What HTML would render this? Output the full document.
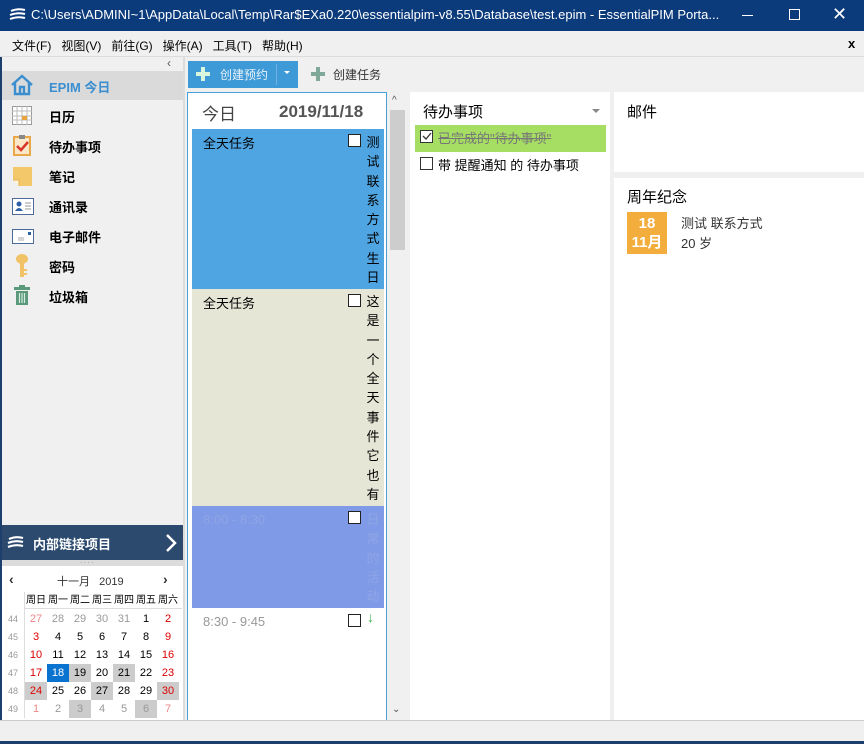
<!DOCTYPE html>
<html><head><meta charset="utf-8"><style>
*{margin:0;padding:0;box-sizing:border-box}
body{width:864px;height:744px;position:relative;overflow:hidden;background:#f0f0f0;font-family:"Liberation Sans","Noto Sans CJK SC",sans-serif;font-size:13px;color:#000}
.a{position:absolute}
.vt{position:absolute;width:14px;font-size:13px;line-height:19.3px;text-align:center}
.cal div{position:absolute;width:22px;height:18px;line-height:18px;text-align:center;font-size:11px}
</style></head><body>
<div class="a" style="left:0;top:0;width:864px;height:31px;background:#0c3b7c"></div>
<svg class="a" style="left:9px;top:8px" width="18" height="14" viewBox="0 0 18 14"><path d="M2 3 Q9 0 16 2 M1 7 Q9 4 16 6 M1 11 Q9 8 16 10" stroke="#fff" stroke-width="2" fill="none"/></svg>
<div class="a" style="left:31px;top:7px;color:#fff;font-size:13px">C:\Users\ADMINI~1\AppData\Local\Temp\Rar$EXa0.220\essentialpim-v8.55\Database\test.epim - EssentialPIM Porta...</div>
<div class="a" style="left:742px;top:15px;width:11px;height:1px;background:#fff"></div>
<div class="a" style="left:789px;top:9px;width:11px;height:11px;border:1px solid #fff"></div>
<div class="a" style="left:832px;top:4px;color:#fff;font-size:18px">✕</div>
<div class="a" style="left:0;top:31px;width:864px;height:26px;background:#f0f0f0;border-bottom:1px solid #dcdcdc"></div>
<div class="a" style="left:12px;top:37px;font-size:12px">文件(F)&nbsp;&nbsp;&nbsp;视图(V)&nbsp;&nbsp;&nbsp;前往(G)&nbsp;&nbsp;&nbsp;操作(A)&nbsp;&nbsp;&nbsp;工具(T)&nbsp;&nbsp;&nbsp;帮助(H)</div>
<div class="a" style="left:848px;top:36px;font-weight:bold;font-size:13px">x</div>
<div class="a" style="left:0;top:57px;width:2px;height:687px;background:#1d3f6e"></div>
<div class="a" style="left:167px;top:56px;font-size:12px;color:#555">‹</div>
<div class="a" style="left:2px;top:71px;width:181px;height:29px;background:#dadada"></div>
<svg class="a" style="left:10px;top:74px" width="24" height="22" viewBox="0 0 24 22"><path d="M2 11 L12 2 L22 11 M5 9 V20 H19 V9 M10 20 V13 H14 V20" stroke="#3b8fd0" stroke-width="2.4" fill="none"/></svg>
<div class="a" style="left:49px;top:77px;color:#3b8fd0;font-weight:bold;font-size:13px">EPIM 今日</div>
<svg class="a" style="left:12px;top:106px" width="20" height="19"><rect x="0.5" y="0.5" width="19" height="18" fill="#fff" stroke="#999"/><path d="M0 5H20M0 10H20M0 14H20M5 0V19M10 0V19M15 0V19" stroke="#bbb"/><rect x="10" y="10" width="5" height="4" fill="#e9a33c"/></svg>
<div class="a" style="left:49px;top:107px;font-weight:bold">日历</div>
<svg class="a" style="left:13px;top:134px" width="18" height="22"><rect x="1" y="3" width="16" height="18" fill="#fbe7c8" stroke="#e8a848" stroke-width="2"/><rect x="6" y="1" width="6" height="4" fill="#888"/><path d="M4 12 L8 16 L15 8" stroke="#d9362a" stroke-width="2.5" fill="none"/></svg>
<div class="a" style="left:49px;top:137px;font-weight:bold">待办事项</div>
<svg class="a" style="left:13px;top:167px" width="20" height="19"><path d="M0 0H19V19H6L0 13Z" fill="#f3c86a"/><path d="M0 13H6V19" fill="#fff5dc" stroke="#e0b050"/></svg>
<div class="a" style="left:49px;top:167px;font-weight:bold">笔记</div>
<svg class="a" style="left:12px;top:198px" width="22" height="17"><rect x="0.5" y="0.5" width="21" height="16" fill="#fff" stroke="#4a6a9a"/><circle cx="7" cy="6" r="2.5" fill="#2b5fa8"/><path d="M3 13 Q7 7 11 13Z" fill="#2b5fa8"/><path d="M13 5H19M13 8H19M13 11H19" stroke="#999"/></svg>
<div class="a" style="left:49px;top:197px;font-weight:bold">通讯录</div>
<svg class="a" style="left:12px;top:229px" width="22" height="15"><rect x="0.5" y="0.5" width="21" height="14" fill="#fff" stroke="#4a6a9a"/><rect x="16" y="3" width="3" height="3" fill="#2b5fa8"/><path d="M6 9H12M6 11H12" stroke="#aaa"/></svg>
<div class="a" style="left:49px;top:227px;font-weight:bold">电子邮件</div>
<svg class="a" style="left:15px;top:254px" width="14" height="24"><ellipse cx="7" cy="5" rx="6" ry="5" fill="#f2c266"/><rect x="5" y="8" width="4" height="15" fill="#f2c266"/><rect x="9" y="15" width="3" height="2" fill="#f2c266"/><rect x="9" y="19" width="3" height="2" fill="#f2c266"/></svg>
<div class="a" style="left:49px;top:257px;font-weight:bold">密码</div>
<svg class="a" style="left:14px;top:285px" width="16" height="20"><rect x="0" y="2" width="16" height="3" fill="#5a9a7a"/><rect x="5" y="0" width="6" height="2" fill="#5a9a7a"/><rect x="2" y="6" width="12" height="14" fill="#5a9a7a"/><path d="M5.5 8V18M8 8V18M10.5 8V18" stroke="#d7ebe0" stroke-width="1.2"/></svg>
<div class="a" style="left:49px;top:287px;font-weight:bold">垃圾箱</div>
<div class="a" style="left:2px;top:525px;width:181px;height:35px;background:#2b4a6e"></div>
<svg class="a" style="left:7px;top:536px" width="18" height="14"><path d="M2 3 Q9 0 16 2 M1 7 Q9 4 16 6 M1 11 Q9 8 16 10" stroke="#fff" stroke-width="2.2" fill="none"/></svg>
<div class="a" style="left:33px;top:534px;color:#fff;font-weight:bold;font-size:13px">内部链接项目</div>
<svg class="a" style="left:165px;top:533px" width="12" height="20"><path d="M2 2 L10 10 L2 18" stroke="#fff" stroke-width="2.5" fill="none"/></svg>
<div class="a" style="left:2px;top:560px;width:181px;height:6px;background:#dcdcdc"></div>
<div class="a" style="left:80px;top:558px;color:#999;font-size:8px;letter-spacing:1px">····</div>
<div class="a" style="left:2px;top:566px;width:181px;height:154px;background:#fff"></div>
<div class="a" style="left:9px;top:571px;font-size:14px;font-weight:bold;color:#333">‹</div>
<div class="a" style="left:57px;top:573px;font-size:11px;color:#333">十一月&nbsp;&nbsp;&nbsp;2019</div>
<div class="a" style="left:163px;top:571px;font-size:14px;font-weight:bold;color:#333">›</div>
<div class="a" style="left:24px;top:592px;width:1px;height:126px;background:#ddd"></div>
<div class="a" style="left:24px;top:608px;width:158px;height:1px;background:#ddd"></div>
<div class="cal a" style="left:0;top:0">
<div style="left:25px;top:592px;font-size:10px">周日</div><div style="left:47px;top:592px;font-size:10px">周一</div><div style="left:69px;top:592px;font-size:10px">周二</div><div style="left:91px;top:592px;font-size:10px">周三</div><div style="left:113px;top:592px;font-size:10px">周四</div><div style="left:135px;top:592px;font-size:10px">周五</div><div style="left:157px;top:592px;font-size:10px">周六</div>
<div style="left:2px;top:610px;color:#999;font-size:9px">44</div><div style="left:25px;top:610px;color:#e88">27</div><div style="left:47px;top:610px;color:#999">28</div><div style="left:69px;top:610px;color:#999">29</div><div style="left:91px;top:610px;color:#999">30</div><div style="left:113px;top:610px;color:#999">31</div><div style="left:135px;top:610px">1</div><div style="left:157px;top:610px;color:#d00">2</div>
<div style="left:2px;top:628px;color:#999;font-size:9px">45</div><div style="left:25px;top:628px;color:#d00">3</div><div style="left:47px;top:628px">4</div><div style="left:69px;top:628px">5</div><div style="left:91px;top:628px">6</div><div style="left:113px;top:628px">7</div><div style="left:135px;top:628px">8</div><div style="left:157px;top:628px;color:#d00">9</div>
<div style="left:2px;top:646px;color:#999;font-size:9px">46</div><div style="left:25px;top:646px;color:#d00">10</div><div style="left:47px;top:646px">11</div><div style="left:69px;top:646px">12</div><div style="left:91px;top:646px">13</div><div style="left:113px;top:646px">14</div><div style="left:135px;top:646px">15</div><div style="left:157px;top:646px;color:#d00">16</div>
<div style="left:2px;top:664px;color:#999;font-size:9px">47</div><div style="left:25px;top:664px;color:#d00">17</div><div style="left:47px;top:664px;background:#0a72cf;color:#fff">18</div><div style="left:69px;top:664px;background:#ccc">19</div><div style="left:91px;top:664px">20</div><div style="left:113px;top:664px;background:#ccc">21</div><div style="left:135px;top:664px">22</div><div style="left:157px;top:664px;color:#d00">23</div>
<div style="left:2px;top:682px;color:#999;font-size:9px">48</div><div style="left:25px;top:682px;color:#d00;background:#ccc">24</div><div style="left:47px;top:682px">25</div><div style="left:69px;top:682px">26</div><div style="left:91px;top:682px;background:#ccc">27</div><div style="left:113px;top:682px">28</div><div style="left:135px;top:682px">29</div><div style="left:157px;top:682px;color:#d00;background:#ccc">30</div>
<div style="left:2px;top:700px;color:#999;font-size:9px">49</div><div style="left:25px;top:700px;color:#e88">1</div><div style="left:47px;top:700px;color:#999">2</div><div style="left:69px;top:700px;color:#999;background:#ccc">3</div><div style="left:91px;top:700px;color:#999">4</div><div style="left:113px;top:700px;color:#999">5</div><div style="left:135px;top:700px;color:#999;background:#ccc">6</div><div style="left:157px;top:700px;color:#e88">7</div>
</div>
<div class="a" style="left:183px;top:57px;width:2px;height:663px;background:#dcdcdc"></div>
<div class="a" style="left:188px;top:61px;width:110px;height:27px;background:#3d9ad6"></div>
<div class="a" style="left:276px;top:64px;width:1px;height:21px;background:#6fb3e2"></div>
<svg class="a" style="left:196px;top:67px" width="14" height="14"><path d="M7 0V14M0 7H14" stroke="#d8f5dd" stroke-width="4"/></svg>
<div class="a" style="left:220px;top:66px;color:#e8f2fb;font-size:12px">创建预约</div>
<div class="a" style="left:284px;top:71px;width:0;height:0;border-left:3px solid transparent;border-right:3px solid transparent;border-top:3px solid #fff"></div>
<svg class="a" style="left:311px;top:67px" width="14" height="14"><path d="M7 0V14M0 7H14" stroke="#7fa898" stroke-width="4"/></svg>
<div class="a" style="left:333px;top:66px;color:#333;font-size:12px">创建任务</div>
<div class="a" style="left:187px;top:92px;width:200px;height:630px;background:#fff;border:1px solid #4a9fd8"></div>
<div class="a" style="left:202px;top:100px;font-size:17px;color:#444">今日</div>
<div class="a" style="left:279px;top:102px;font-size:17px;font-weight:bold;color:#555">2019/11/18</div>
<div class="a" style="left:192px;top:129px;width:192px;height:160px;background:#4fa4e2"></div>
<div class="a" style="left:192px;top:289px;width:192px;height:217px;background:#e6e6d6"></div>
<div class="a" style="left:192px;top:506px;width:192px;height:102px;background:#7f9ae6"></div>
<div class="a" style="left:203px;top:133px">全天任务</div>
<div class="a" style="left:203px;top:293px">全天任务</div>
<div class="a" style="left:203px;top:512px;color:#8fa5e6">8:00 - 8:30</div>
<div class="a" style="left:203px;top:614px;color:#999">8:30 - 9:45</div>
<div class="a" style="left:348px;top:134px;width:13px;height:13px;border:1px solid #222;background:#fff"></div>
<div class="a" style="left:348px;top:294px;width:13px;height:13px;border:1px solid #222;background:#fff"></div>
<div class="a" style="left:348px;top:511px;width:13px;height:13px;border:1px solid #222;background:#fff"></div>
<div class="a" style="left:348px;top:614px;width:13px;height:13px;border:1px solid #222;background:#fff"></div>
<div class="vt" style="left:366px;top:133px">测<br>试<br>联<br>系<br>方<br>式<br>生<br>日</div>
<div class="a" style="left:366px;top:292px;width:14px;height:214px;overflow:hidden"><div class="vt" style="left:0;top:0">这<br>是<br>一<br>个<br>全<br>天<br>事<br>件<br>它<br>也<br>有<br>一</div></div>
<div class="vt" style="left:366px;top:510px;color:#8fa5e6">日<br>常<br>的<br>活<br>动</div>
<div class="a" style="left:367px;top:609px;color:#3bb04a;font-size:14px">↓</div>
<div class="a" style="left:388px;top:92px;width:19px;height:630px;background:#f0f0f0"></div>
<div class="a" style="left:390px;top:110px;width:15px;height:140px;background:#cdcdcd"></div>
<div class="a" style="left:392px;top:95px;font-size:10px;color:#555">^</div>
<div class="a" style="left:392px;top:704px;font-size:10px;color:#555">⌄</div>
<div class="a" style="left:410px;top:92px;width:200px;height:630px;background:#fff"></div>
<div class="a" style="left:423px;top:101px;font-size:15px">待办事项</div>
<div class="a" style="left:592px;top:109px;border-left:4px solid transparent;border-right:4px solid transparent;border-top:4px solid #888"></div>
<div class="a" style="left:415px;top:125px;width:191px;height:27px;background:#a5de62"></div>
<div class="a" style="left:420px;top:130px;width:13px;height:13px;border:1px solid #333;background:#fff"></div>
<svg class="a" style="left:421px;top:131px" width="11" height="11"><path d="M2 5 L5 8 L10 2" stroke="#333" stroke-width="1.3" fill="none"/></svg>
<div class="a" style="left:438px;top:128px;color:#777;text-decoration:line-through">已完成的"待办事项"</div>
<div class="a" style="left:420px;top:157px;width:13px;height:13px;border:1px solid #333;background:#fff"></div>
<div class="a" style="left:438px;top:155px">带 提醒通知 的 待办事项</div>
<div class="a" style="left:614px;top:92px;width:250px;height:80px;background:#fff"></div>
<div class="a" style="left:627px;top:101px;font-size:15px">邮件</div>
<div class="a" style="left:614px;top:178px;width:250px;height:544px;background:#fff"></div>
<div class="a" style="left:627px;top:186px;font-size:15px">周年纪念</div>
<div class="a" style="left:627px;top:212px;width:40px;height:42px;background:#f2ad3c;color:#fff;font-weight:bold;font-size:15px;line-height:19px;text-align:center;padding-top:2px">18<br>11月</div>
<div class="a" style="left:681px;top:213px;color:#333">测试 联系方式</div>
<div class="a" style="left:681px;top:233px;color:#333">20 岁</div>
<div class="a" style="left:0;top:720px;width:864px;height:24px;background:#f0f0f0;border-top:1px solid #ccc"></div>
<div class="a" style="left:0;top:741px;width:864px;height:3px;background:#1d3f6e"></div>
</body></html>
